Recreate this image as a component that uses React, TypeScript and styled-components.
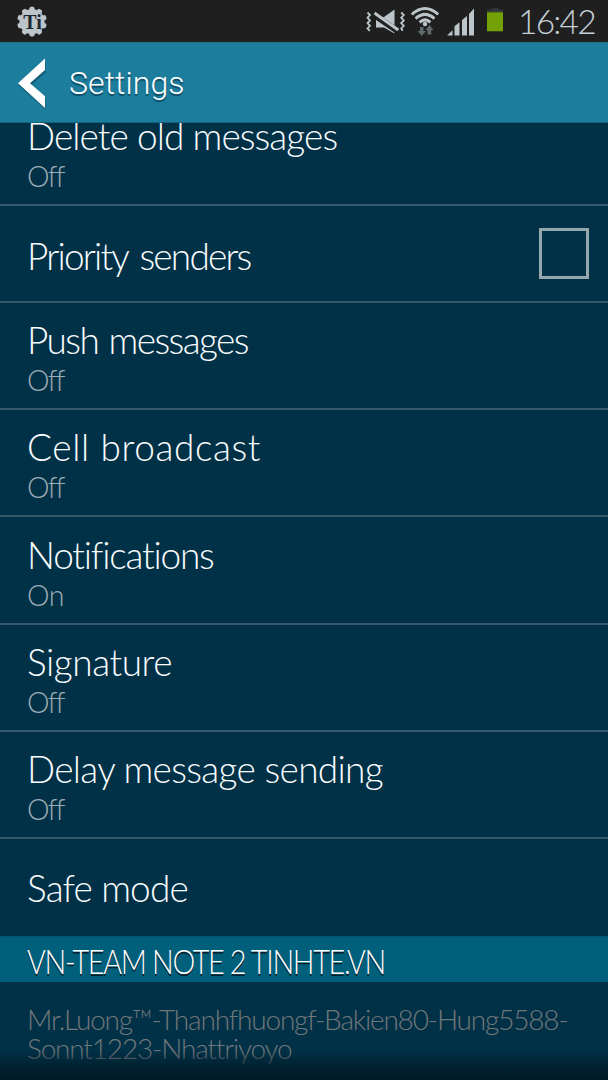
import React from "react";
import styled, { createGlobalStyle } from "styled-components";

const GlobalStyle = createGlobalStyle`
  * { box-sizing: border-box; }
  body { margin: 0; background: #013147; }
`;

const Screen = styled.div`
  width: 608px;
  height: 1080px;
  display: flex;
  flex-direction: column;
  overflow: hidden;
  position: relative;
  background: #013147;
  font-family: Lato, "Open Sans", sans-serif;
  font-weight: 300;
  color: #fafcfd;
`;

const StatusBar = styled.header`
  flex: none;
  height: 42px;
  display: flex;
  align-items: flex-start;
  background: #1f1f1f;
`;

const StatusIcons = styled.svg`
  flex: none;
  display: block;
`;

const Clock = styled.time`
  flex: none;
  width: 98px;
  padding-left: 8px;
  font-size: 33.5px;
  line-height: 43px;
  letter-spacing: -1.8px;
  color: #c4d1d7;
  white-space: nowrap;
`;

const Spacer = styled.div`
  flex: 1;
`;

const ActionBar = styled.div`
  flex: none;
  height: 81px;
  display: flex;
  align-items: center;
  background: #1c7d9c;
  border-top: 1px solid #237389;
  border-bottom: 1px solid #12627d;
`;

const PageTitle = styled.h1`
  margin: 0 0 0 19px;
  font: 300 32px/40px Roboto, sans-serif;
  letter-spacing: 0.1px;
  color: #fff;
  text-shadow: 0 2px 1px rgba(0, 40, 60, 0.6);
`;

const List = styled.main`
  flex: 1;
  min-height: 0;
  display: flex;
  flex-direction: column;
  overflow: hidden;
`;

const Row = styled.div<{ $height: number; $single: boolean; $last?: boolean }>`
  flex: none;
  height: ${(p) => p.$height}px;
  padding: 0 19px 0 27px;
  display: flex;
  align-items: ${(p) => (p.$single ? "center" : "flex-end")};
  justify-content: space-between;
  border-bottom: ${(p) => (p.$last ? 0 : 2)}px solid #35586a;
`;

const RowText = styled.div<{ $single: boolean; $last?: boolean }>`
  display: flex;
  flex-direction: column;
  padding: ${(p) => (p.$single ? (p.$last ? "1px 0 0" : "5px 0 0") : "0 0 10px")};
`;

const RowTitle = styled.span<{ $spacing: number; $wordGap?: number }>`
  font-size: 37px;
  line-height: 44px;
  letter-spacing: ${(p) => p.$spacing}px;
  word-spacing: ${(p) => p.$wordGap ?? 0}px;
  white-space: nowrap;
`;

const RowValue = styled.span<{ $tight: boolean }>`
  font-size: 28.5px;
  line-height: 36px;
  letter-spacing: ${(p) => (p.$tight ? -1.7 : -0.6)}px;
  color: #9cadb5;
`;

const Checkbox = styled.div`
  width: 50px;
  height: 51px;
  border: 3px solid #94a6ae;
`;

const SectionHeader = styled.h2`
  flex: none;
  margin: 0;
  height: 46px;
  padding-left: 27px;
  background: #00607c;
  border-top: 1px solid #02556f;
  font-size: 33px;
  font-weight: 300;
  line-height: 48px;
  letter-spacing: -1.5px;
  color: #fff;
  text-shadow: 0 2px 0 #06202c;
  white-space: nowrap;
`;

const Condensed = styled.span`
  display: inline-block;
  transform: scaleX(0.871);
  transform-origin: left;
`;

const Credits = styled.p`
  margin: 0;
  padding: 23px 0 0 27px;
  font-size: 28px;
  line-height: 28.6px;
  letter-spacing: -1.18px;
  color: #70777a;
  white-space: nowrap;
`;

const BottomFade = styled.div`
  position: absolute;
  left: 0;
  right: 0;
  bottom: 0;
  height: 30px;
  background: linear-gradient(rgba(0, 28, 41, 0), rgba(0, 28, 41, 0.85) 65%, #001c29);
  pointer-events: none;
`;

type Item = {
  title: string;
  spacing: number;
  wordGap?: number;
  value?: string;
  checkbox?: boolean;
  height: number;
};

const items: Item[] = [
  { title: "Delete old messages", spacing: -0.93, value: "Off", height: 83 },
  { title: "Priority senders", spacing: -1.8, wordGap: 4, checkbox: true, height: 97 },
  { title: "Push messages", spacing: -1.6, wordGap: 2, value: "Off", height: 107.2 },
  { title: "Cell broadcast", spacing: 0.62, value: "Off", height: 107.2 },
  { title: "Notifications", spacing: -1.2, value: "On", height: 107.2 },
  { title: "Signature", spacing: -0.45, value: "Off", height: 107.2 },
  { title: "Delay message sending", spacing: -0.68, value: "Off", height: 107.2 },
  { title: "Safe mode", spacing: -0.85, height: 97 },
];

const gearTeeth = Array.from({ length: 10 }, (_, i) => i * 36);

const AppGear = () => (
  <StatusIcons width="50" height="42" viewBox="0 0 50 42">
    <g fill="#bcc5c9">
      <circle cx="32" cy="21.7" r="12.6" />
      {gearTeeth.map((a) => (
        <rect key={a} x="29.400" y="6.8" width="5.200" height="6" rx="1.800" transform={`rotate(${a} 32 21.7)`} />
      ))}
    </g>
    <text x="32.5" y="28.5" textAnchor="middle" fontFamily="Liberation Serif, serif" fontWeight="700" fontSize="20" fill="#1d2930">
      Ti
    </text>
  </StatusIcons>
);

const SystemIcons = () => (
  <StatusIcons width="146" height="42" viewBox="364 0 146 42">
    <g fill="none" stroke="#bcc5c9" strokeWidth="1.8">
      <path d="M367.500 12.500l2.500 2.500-2.500 2.700 2.500 2.700-2.500 2.700 2.500 2.700-2.500 2.700 2.300 2.300" />
      <path d="M401.200 12.500l2.600 2.500-2.600 2.700 2.600 2.700-2.600 2.700 2.600 2.700-2.600 2.700 1.500 2.300" />
    </g>
    <path d="M376 17h8l10.500-7.500v24L384 27.500h-8z" fill="#bcc5c9" />
    <path d="M373.500 14.500L399 32" stroke="#1f1f1f" strokeWidth="6" />
    <path d="M374.500 13L398.300 30" stroke="#bcc5c9" strokeWidth="3" />
    <g fill="none" stroke="#bcc5c9" strokeWidth="3">
      <path d="M411.800 14.500Q425 2.500 438.200 14.500" />
      <path d="M415.600 18.600Q425 10.200 434.400 18.600" />
      <path d="M419.600 22.300Q425 17.500 430.400 22.300" />
    </g>
    <circle cx="425" cy="24" r="2.200" fill="#bcc5c9" />
    <path d="M420 27h3.500v4h2.500l-4.200 5-4.200-5h2.400zM427.500 34.500v-4.500h-2l4-5 4 5h-2.200v4.500z" fill="#5f686c" />
    <path
      d="M447 35.500l5.500-5.200v5.200zM454.500 35.500v-9.300l5-4v13.300zM462 35.500v-15.500l5-4v19.500zM469 35.500v-21.500l5-5.500v27z"
      fill="#bcc5c9"
    />
    <path d="M487 12.200v-2.500h4.500v-1.500h7v1.500h4.500v2.500z" fill="#343a3c" />
    <rect x="487" y="12.300" width="16" height="19" fill="#73a005" />
  </StatusIcons>
);

const BackArrow = () => (
  <StatusIcons width="50" height="80" viewBox="0 42 50 80">
    <path d="M45.500 59.500v12l-14.500 13 14.500 12.500v11.500l-27-24z" fill="#075069" opacity="0.7" />
    <path d="M45 57.500v11.500l-15 13.200 15 13v11.800l-27-24.800z" fill="#fff" />
  </StatusIcons>
);

export default function App() {
  return (
    <Screen>
      <GlobalStyle />
      <StatusBar>
        <AppGear />
        <Spacer />
        <SystemIcons />
        <Clock>16:42</Clock>
      </StatusBar>
      <ActionBar>
        <BackArrow />
        <PageTitle>Settings</PageTitle>
      </ActionBar>
      <List>
        {items.map((item, i) => {
          const last = i === items.length - 1;
          return (
            <Row key={item.title} $height={item.height} $single={!item.value} $last={last}>
              <RowText $single={!item.value} $last={last}>
                <RowTitle $spacing={item.spacing} $wordGap={item.wordGap}>
                  {item.title}
                </RowTitle>
                {item.value && <RowValue $tight={item.value === "Off"}>{item.value}</RowValue>}
              </RowText>
              {item.checkbox && <Checkbox role="checkbox" aria-checked="false" />}
            </Row>
          );
        })}
        <SectionHeader>
          <Condensed>VN-TEAM NOTE 2 TINHTE.VN</Condensed>
        </SectionHeader>
        <Credits>
          Mr.Luong™-Thanhfhuongf-Bakien80-Hung5588-
          <br />
          Sonnt1223-Nhattriyoyo
        </Credits>
      </List>
      <BottomFade />
    </Screen>
  );
}
